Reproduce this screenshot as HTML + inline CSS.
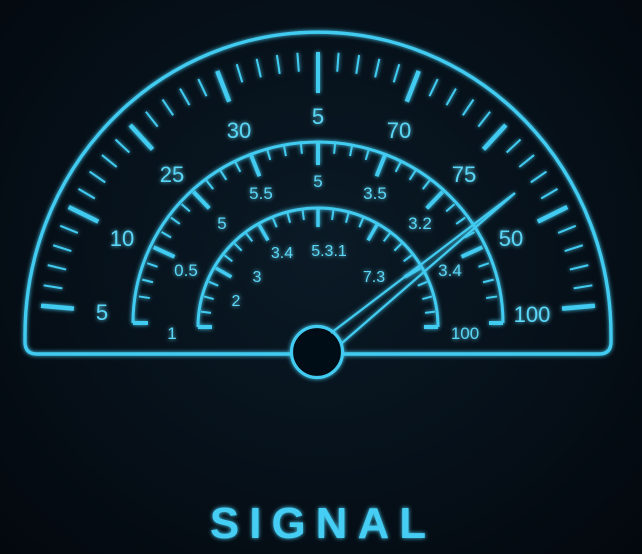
<!DOCTYPE html>
<html><head><meta charset="utf-8"><style>
html,body{margin:0;padding:0;background:#040b12;}
body{width:642px;height:554px;overflow:hidden;background:radial-gradient(ellipse at 50% 45%,#0a1a26 0%,#061019 55%,#03080d 100%);}
svg{display:block}
text{font-family:"Liberation Sans",sans-serif;fill:#5ad6f6;}
</style></head><body>
<svg id="g" width="642" height="554" viewBox="0 0 642 554">
<defs>
<filter id="glow" x="-20%" y="-20%" width="140%" height="140%">
<feGaussianBlur stdDeviation="2.2" result="b"/>
<feMerge><feMergeNode in="b"/><feMergeNode in="SourceGraphic"/></feMerge>
</filter>
</defs>
<g id="main" filter="url(#glow)" stroke="#42cbf0" fill="none" stroke-linecap="butt">
<path d="M25,335 L25,342 Q25,354 37,354 L292,354 M344,354 L599,354 Q611,354 611,342 L611,335 A293,303 0 0 0 25,335" stroke-width="3.4"/>
<path d="M133,323 A185,181 0 0 1 503,323" stroke-width="3"/>
<path d="M133,323 L148,323 M503,323 L489,323" stroke-width="4"/>
<path d="M198,327 A120,119 0 0 1 438,327" stroke-width="3"/>
<path d="M198,327 L212,327 M438,327 L424,327" stroke-width="4"/>
<circle cx="317" cy="352" r="25.5" stroke-width="3.2" fill="#061019"/>
<path d="M331,333 L515,193 L342,343" stroke-width="2.2" stroke-linejoin="miter"/>
</g>
<g id="ticks" filter="url(#glow)" stroke="#42cbf0" stroke-linecap="butt"></g>
<g filter="url(#glow)" font-size="22" text-anchor="middle">
<text x="318" y="124">5</text>
<text x="239" y="138">30</text>
<text x="399" y="138">70</text>
<text x="172" y="182">25</text>
<text x="464" y="182">75</text>
<text x="122" y="246">10</text>
<text x="511" y="246">50</text>
<text x="102" y="320">5</text>
<text x="532" y="322">100</text>
</g>
<g filter="url(#glow)" font-size="17" text-anchor="middle">
<text x="318" y="187">5</text>
<text x="261" y="199">5.5</text>
<text x="375" y="199">3.5</text>
<text x="222" y="229">5</text>
<text x="420" y="229">3.2</text>
<text x="186" y="276">0.5</text>
<text x="450" y="276">3.4</text>
<text x="172" y="339">1</text>
<text x="465" y="339">100</text>
</g>
<g filter="url(#glow)" font-size="16" text-anchor="middle">
<text x="329" y="256">5.3.1</text>
<text x="282" y="258">3.4</text>
<text x="257" y="282">3</text>
<text x="236" y="306">2</text>
<text x="374" y="282">7.3</text>
</g>
<text x="323" y="538" text-anchor="middle" font-size="44" font-weight="bold" letter-spacing="10" filter="url(#glow)" style="fill:#45cdf3">SIGNAL</text>
</svg>
<script>
var g=document.getElementById('ticks'),ns='http://www.w3.org/2000/svg';
function L(cx,cy,a,r1,r2,w){var t=a*Math.PI/180,c=Math.cos(t),s=Math.sin(t);
var l=document.createElementNS(ns,'line');l.setAttribute('x1',cx-c*r1);l.setAttribute('y1',cy-s*r1);
l.setAttribute('x2',cx-c*r2);l.setAttribute('y2',cy-s*r2);l.setAttribute('stroke-width',w);g.appendChild(l);}
for(var i=0;i<=40;i++){var a=5+i*4.25;var maj=i%5==0;
 if(i==20)L(318,330,a,237,278,4);else if(maj)L(318,330,a,245,278,4.5);else L(318,330,a,259,278,2);}
for(var i=0;i<=32;i++){var a=3+i*(174/32);if(i==0||i==32)continue;var maj=i%4==0;
 L(318,323,a,181,maj?158:170,maj?4:2);}
for(var i=1;i<24;i++){var a=i*(180/24);var maj=i%4==0;
 L(318,327,a,118,maj?100:108,maj?3.5:2);}
</script>
</body></html>
